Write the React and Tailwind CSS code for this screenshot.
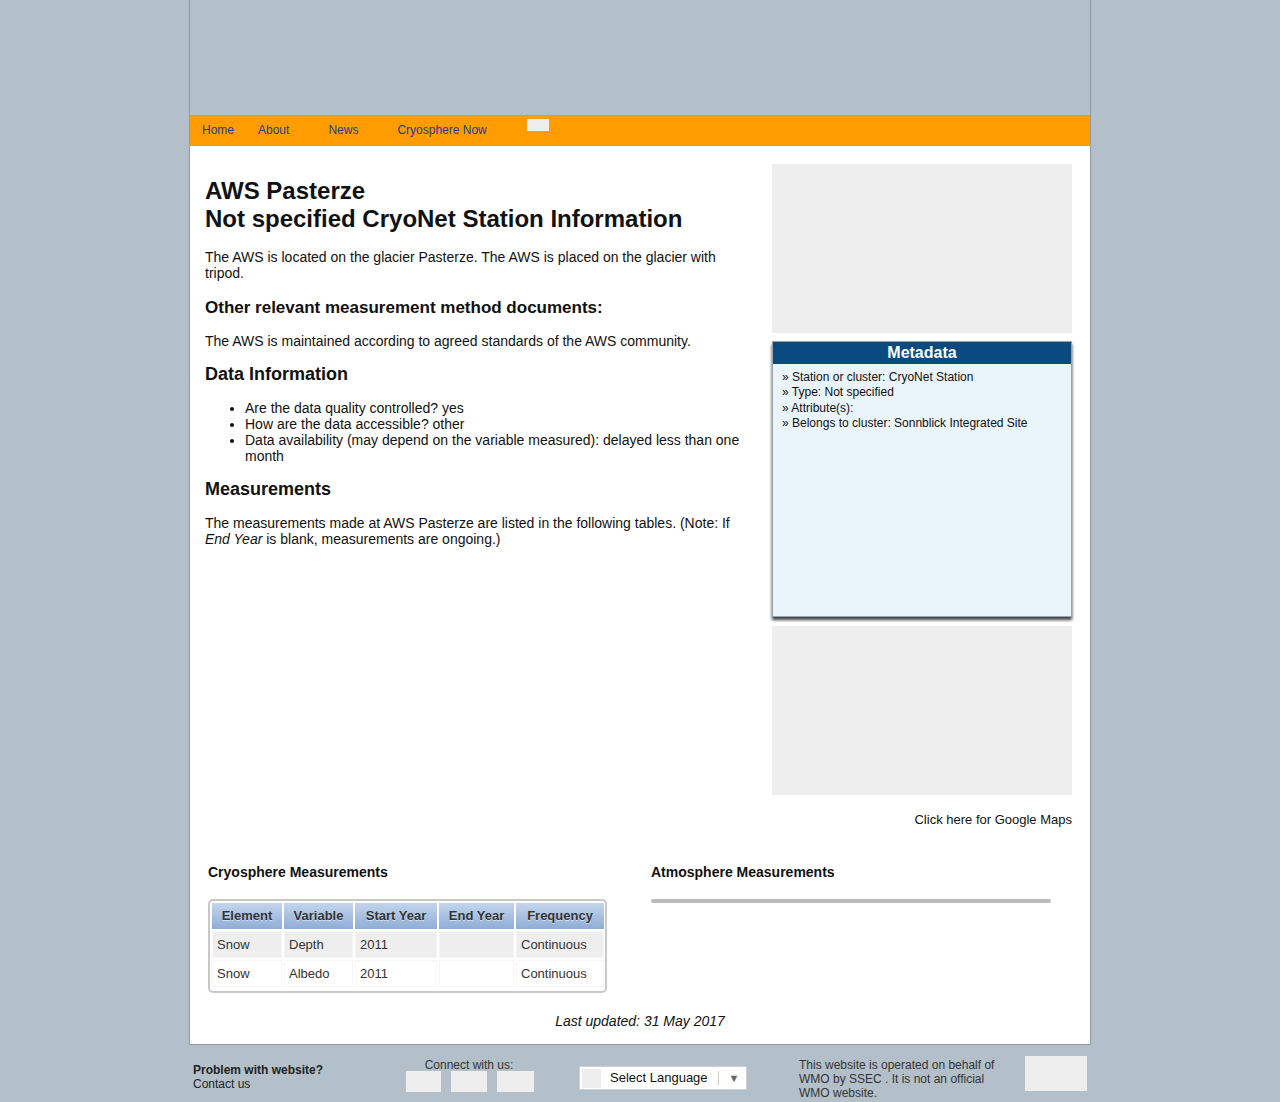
import React from 'react'

const cryo = [
  { element: 'Snow', variable: 'Depth', start: '2011', end: '', freq: 'Continuous' },
  { element: 'Snow', variable: 'Albedo', start: '2011', end: '', freq: 'Continuous' },
]

const metadata = [
  'Station or cluster: CryoNet Station',
  'Type: Not specified',
  'Attribute(s):',
  'Belongs to cluster: Sonnblick Integrated Site',
]

const App = () => {
  return (
    <div className="min-h-[1102px] bg-[#b3c0c9] font-['Liberation_Sans',Arial,sans-serif] text-[#111]">
      <div className="mx-auto w-[902px] border-x border-[#8f9ba4]">
        {/* banner */}
        <div className="h-[115px]"></div>

        {/* nav */}
        <nav className="flex h-[31px] items-center bg-[#ff9c00] pb-[2px] text-[12px] text-[#2b3990]">
          <a className="ml-[12px]">Home</a>
          <a className="ml-[24px]">About</a>
          <a className="ml-[39px]">News</a>
          <a className="ml-[39px]">Cryosphere Now</a>
          <span className="mb-[9px] ml-[40px] h-[12px] w-[22px] bg-[#eeeeee]"></span>
        </nav>

        {/* content */}
        <div className="bg-white pb-[15px]">
          <div className="flex pl-[15px] pr-[18px] pt-[18px]">
            <div className="w-[550px] text-[14px] leading-[16px]">
              <h1 className="mt-[13px] text-[24px] font-bold leading-[28px]">
                AWS Pasterze
                <br />
                Not specified CryoNet Station Information
              </h1>
              <p className="mt-[16px]">
                The AWS is located on the glacier Pasterze. The AWS is placed on the glacier with tripod.
              </p>
              <h2 className="mt-[17px] text-[17px] font-bold leading-[20px]">
                Other relevant measurement method documents:
              </h2>
              <p className="mt-[15px]">The AWS is maintained according to agreed standards of the AWS community.</p>
              <h3 className="mt-[14px] text-[18px] font-bold leading-[22px]">Data Information</h3>
              <ul className="mt-[15px] list-disc pl-[40px]">
                <li>Are the data quality controlled? yes</li>
                <li>How are the data accessible? other</li>
                <li>Data availability (may depend on the variable measured): delayed less than one month</li>
              </ul>
              <h3 className="mt-[14px] text-[18px] font-bold leading-[22px]">Measurements</h3>
              <p className="mt-[15px]">
                The measurements made at AWS Pasterze are listed in the following tables. (Note: If <i>End Year</i> is
                blank, measurements are ongoing.)
              </p>
            </div>

            <div className="ml-auto w-[300px]">
              <div className="h-[169px] bg-[#eeeeee]"></div>
              <div className="mt-[8px] flex h-[276px] flex-col border border-[#9aa3aa] bg-[#eaf4fb] shadow-[0_3px_3px_rgba(0,0,0,0.75)]">
                <div className="h-[22px] bg-[#0b4a7e] text-center text-[16px] font-bold leading-[22px] text-white">
                  Metadata
                </div>
                <ul className="pl-[9px] pt-[6px] text-[12px] leading-[15.4px] text-[#111]">
                  {metadata.map((m) => (
                    <li key={m}>» {m}</li>
                  ))}
                </ul>
              </div>
              <div className="mt-[9px] h-[169px] bg-[#eeeeee]"></div>
              <p className="mt-[17px] text-right text-[13px] leading-[16px]">Click here for Google Maps</p>
            </div>
          </div>

          {/* tables */}
          <div className="mt-[36px] flex pl-[18px]">
            <div className="w-[443px]">
              <h4 className="text-[14px] font-bold leading-[16px]">Cryosphere Measurements</h4>
              <div className="mt-[19px] w-[399px] rounded-[5px] border-2 border-[#c8c8c8] pb-[2px]">
                <table className="w-full table-fixed border-separate border-spacing-x-[2px] border-spacing-y-[2px] text-[13px] text-[#333]">
                  <colgroup>
                    <col className="w-[70px]" />
                    <col className="w-[69px]" />
                    <col className="w-[82px]" />
                    <col className="w-[75px]" />
                    <col className="w-[88px]" />
                  </colgroup>
                  <thead>
                    <tr>
                      {['Element', 'Variable', 'Start Year', 'End Year', 'Frequency'].map((h) => (
                        <th
                          key={h}
                          className="h-[26px] bg-gradient-to-b from-[#c3d5ec] to-[#8fadd6] text-center font-bold [text-shadow:0_1px_0_rgba(255,255,255,0.5)]"
                        >
                          {h}
                        </th>
                      ))}
                    </tr>
                  </thead>
                  <tbody>
                    {cryo.map((r, i) => (
                      <tr key={r.variable} className={i === 0 ? 'bg-[#eeeeee]' : 'bg-white'}>
                        <td className="h-[27px] border border-[#f6f6f6] px-[4px]">{r.element}</td>
                        <td className="border border-[#f6f6f6] px-[4px]">{r.variable}</td>
                        <td className="border border-[#f6f6f6] px-[4px]">{r.start}</td>
                        <td className="border border-[#f6f6f6] px-[4px]">{r.end}</td>
                        <td className="border border-[#f6f6f6] px-[4px]">{r.freq}</td>
                      </tr>
                    ))}
                  </tbody>
                </table>
              </div>
            </div>
            <div className="w-[420px]">
              <h4 className="text-[14px] font-bold leading-[16px]">Atmosphere Measurements</h4>
              <div className="mt-[19px] h-[4px] w-[400px] rounded-full bg-[#bbbbbb]"></div>
            </div>
          </div>

          <p className="mt-[20px] text-center text-[14px] italic leading-[16px]">Last updated: 31 May 2017</p>
        </div>
        <div className="h-px bg-[#8f9ba4]"></div>
      </div>

      {/* footer */}
      <footer className="mx-auto flex w-[902px] pt-[11px] text-[12px] leading-[14px] text-[#222]">
        <div className="ml-[4px] w-[200px] pt-[7px]">
          <p className="font-bold">Problem with website?</p>
          <p>Contact us</p>
        </div>
        <div className="w-[152px] pt-[2px] text-center text-[#333]">
          <p>Connect with us:</p>
          <div className="mt-[-1px] flex justify-center gap-[10px] pl-[2px]">
            <span className="h-[21px] w-[35px] bg-[#eeeeee]"></span>
            <span className="h-[21px] w-[36px] bg-[#eeeeee]"></span>
            <span className="h-[21px] w-[37px] bg-[#eeeeee]"></span>
          </div>
        </div>
        <div className="ml-[34px] mt-[10px] flex h-[24px] w-[168px] items-center border border-[#d0d0d0] bg-white text-[13px] text-[#111]">
          <span className="ml-[2px] h-[19px] w-[19px] bg-[#eeeeee]"></span>
          <span className="ml-[9px]">Select Language</span>
          <span className="ml-[10px] h-[14px] w-px bg-[#cccccc]"></span>
          <span className="ml-[10px] text-[11px] text-[#666]">▼</span>
        </div>
        <div className="ml-[52px] w-[200px] pt-[2px] text-[#333]">
          This website is operated on behalf of WMO by SSEC . It is not an official WMO website.
        </div>
        <div className="ml-[26px] h-[35px] w-[62px] bg-[#eeeeee]"></div>
      </footer>
    </div>
  )
}

export default App
